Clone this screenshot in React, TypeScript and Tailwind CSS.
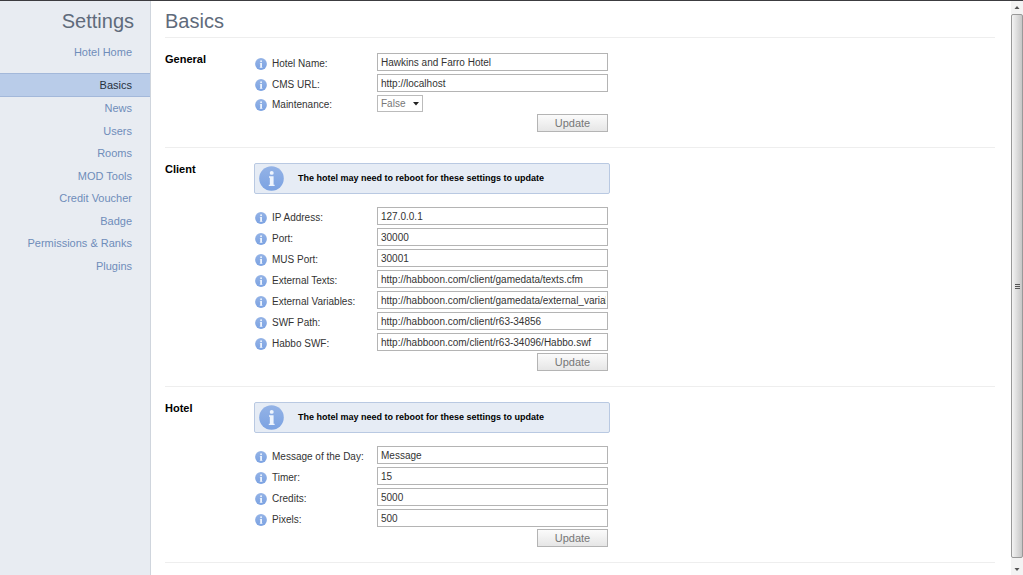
import React from 'react';

type Field = {
  id: string;
  label: string;
  value: string;
  options?: string[];
};

type Section = {
  title: string;
  notice?: string;
  fields: Field[];
};

const navItems = [
  'News',
  'Users',
  'Rooms',
  'MOD Tools',
  'Credit Voucher',
  'Badge',
  'Permissions & Ranks',
  'Plugins',
];

const rebootNotice = 'The hotel may need to reboot for these settings to update';

const sections: Section[] = [
  {
    title: 'General',
    fields: [
      { id: 'hotel-name', label: 'Hotel Name:', value: 'Hawkins and Farro Hotel' },
      { id: 'cms-url', label: 'CMS URL:', value: 'http://localhost' },
      { id: 'maintenance', label: 'Maintenance:', value: 'False', options: ['False', 'True'] },
    ],
  },
  {
    title: 'Client',
    notice: rebootNotice,
    fields: [
      { id: 'ip', label: 'IP Address:', value: '127.0.0.1' },
      { id: 'port', label: 'Port:', value: '30000' },
      { id: 'mus-port', label: 'MUS Port:', value: '30001' },
      { id: 'texts', label: 'External Texts:', value: 'http://habboon.com/client/gamedata/texts.cfm' },
      { id: 'variables', label: 'External Variables:', value: 'http://habboon.com/client/gamedata/external_variables.cfm' },
      { id: 'swf-path', label: 'SWF Path:', value: 'http://habboon.com/client/r63-34856' },
      { id: 'habbo-swf', label: 'Habbo SWF:', value: 'http://habboon.com/client/r63-34096/Habbo.swf' },
    ],
  },
  {
    title: 'Hotel',
    notice: rebootNotice,
    fields: [
      { id: 'motd', label: 'Message of the Day:', value: 'Message' },
      { id: 'timer', label: 'Timer:', value: '15' },
      { id: 'credits', label: 'Credits:', value: '5000' },
      { id: 'pixels', label: 'Pixels:', value: '500' },
    ],
  },
];

const InfoIcon: React.FC<{ className: string }> = ({ className }) => (
  <svg viewBox="0 0 24 24" className={className} aria-hidden="true">
    <defs>
      <linearGradient id="info-fill" x1="0" y1="0" x2="0" y2="1">
        <stop offset="0" stopColor="#94b3e6" />
        <stop offset="1" stopColor="#7ba2e2" />
      </linearGradient>
    </defs>
    <circle cx="12" cy="12" r="11.8" fill="url(#info-fill)" />
    <circle cx="12.2" cy="6.6" r="1.9" fill="#eef4fd" />
    <path d="M9.6 9.8h4.4v9.4h-3.6v-8H9.6z" fill="#eef4fd" />
    <path d="M9.4 18h5.6v1.2H9.4z" fill="#eef4fd" />
  </svg>
);

const FieldRow: React.FC<{ field: Field }> = ({ field }) => (
  <div className="flex items-end">
    <label htmlFor={field.id} className="flex w-[122px] shrink-0 items-center gap-[5px] pt-[3px] leading-[14px] text-[#333]">
      <InfoIcon className="size-3" />
      {field.label}
    </label>
    {field.options ? (
      <div className="relative">
        <select
          id={field.id}
          defaultValue={field.value}
          className="block h-[17px] w-[46px] appearance-none border border-[#bbb] bg-white pl-[3px] text-[#777]"
        >
          {field.options.map((option) => (
            <option key={option}>{option}</option>
          ))}
        </select>
        <svg viewBox="0 0 6 4" className="pointer-events-none absolute top-[7px] right-1 h-1 w-[6px]" aria-hidden="true">
          <path d="M0 0h6L3 3.6z" fill="#222" />
        </svg>
      </div>
    ) : (
      <input
        id={field.id}
        type="text"
        defaultValue={field.value}
        className="h-[18px] min-w-0 flex-1 border border-[#b4b4b4] bg-white pr-px pl-[3px] text-[#333]"
      />
    )}
  </div>
);

const SettingsSection: React.FC<{ section: Section }> = ({ section }) => (
  <section className="flex border-b border-[#eee] pt-[15px] pb-[14px]">
    <h2 className="w-[89px] shrink-0 text-[11px] leading-3 font-bold text-black">{section.title}</h2>
    <div className="w-full max-w-[356px]">
      {section.notice && (
        <div className="mb-[13px] flex h-[31px] items-center gap-[14px] rounded-xs border border-[#b9c9e2] bg-[#e6ecf5] px-1 text-[9px] font-bold text-black">
          <InfoIcon className="size-[25px]" />
          {section.notice}
        </div>
      )}
      <form className="pr-[2px] pl-px" onSubmit={(e) => e.preventDefault()}>
        <div className="mb-[2px] flex flex-col gap-[3px]">
          {section.fields.map((field) => (
            <FieldRow key={field.id} field={field} />
          ))}
        </div>
        <div className="flex justify-end pb-px">
          <button
            type="submit"
            className="h-[18px] w-[71px] border border-[#b4b4b4] bg-linear-to-b from-[#fbfbfb] to-[#e6e6e6] text-[11px] leading-4 text-[#777]"
          >
            Update
          </button>
        </div>
      </form>
    </div>
  </section>
);

const SettingsPage: React.FC = () => (
  <div className="flex h-screen overflow-hidden border-t border-[#3c3c40] bg-white font-['Liberation_Sans',Arial,sans-serif] text-[10px]">
    <aside className="w-[151px] shrink-0 border-r border-[#cfd5dd] bg-[#e8ecf2] text-right">
      <h1 className="pt-2 pr-4 text-[20px] leading-6 text-[#5f6b7b]">Settings</h1>
      <nav className="pt-2 text-[11px] text-[#6f8dba]">
        <a href="#home" className="block pr-[18px] leading-[22px]">Hotel Home</a>
        <a
          href="#basics"
          aria-current="page"
          className="mt-[10px] block border-y border-[#a3b8da] bg-[#b9cce9] pr-[18px] leading-[22px] text-[#27303d]"
        >
          Basics
        </a>
        <ul className="flex h-[180px] flex-col justify-between">
          {navItems.map((item) => (
            <li key={item} className="pr-[18px] leading-[22px]">
              <a href="#settings">{item}</a>
            </li>
          ))}
        </ul>
      </nav>
    </aside>

    <main className="min-w-0 flex-1 overflow-hidden pr-4 pl-[14px]">
      <h1 className="border-b border-[#eee] pt-2 pb-1 text-[20px] leading-6 text-[#5f6b7b]">Basics</h1>
      {sections.map((section) => (
        <SettingsSection key={section.title} section={section} />
      ))}
    </main>

    {/* scroll bar */}
    <div className="flex w-3 shrink-0 flex-col items-center bg-[#f3f3f3]" aria-hidden="true">
      <svg viewBox="0 0 12 13" className="h-[13px] w-3">
        <path d="M3.5 8L6 5l2.5 3z" fill="#555" />
      </svg>
      <div className="flex w-full flex-1 flex-col items-center justify-center gap-px rounded-xs border border-[#999] bg-linear-to-r from-[#f4f4f4] to-[#c6c6c6]">
        <span className="h-px w-[5px] bg-[#555]" />
        <span className="h-px w-[5px] bg-[#555]" />
        <span className="h-px w-[5px] bg-[#555]" />
      </div>
      <svg viewBox="0 0 12 17" className="h-[17px] w-3">
        <path d="M3.5 10h5L6 13z" fill="#555" />
      </svg>
    </div>
  </div>
);

export default SettingsPage;
